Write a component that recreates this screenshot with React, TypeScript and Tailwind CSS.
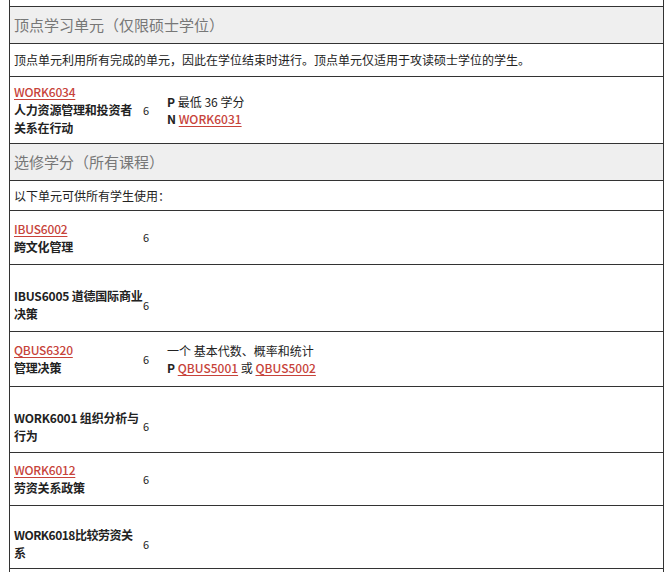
import React from "react";

const L = ({ c }: { c: string }) => (
  <a className="text-[#c7433a] underline decoration-[#c7433a] underline-offset-2 font-medium">{c}</a>
);

const Row = ({ h, a, b, c, pt = "" }: { h: string; a: React.ReactNode; b?: string; c?: React.ReactNode; pt?: string }) => (
  <div className={`flex items-center border-b border-[#333] ${h} ${pt}`}>
    <div className="w-[133px] pl-[4px] leading-[18px] tracking-[-0.2px]">{a}</div>
    <div className="w-[24px] text-[11px]">{b}</div>
    <div className="flex-1 leading-[17px]">{c}</div>
  </div>
);

export default function App() {
  return (
    <div className="w-[670px] h-[572px] overflow-hidden bg-white text-[12px] text-[#222]" style={{ fontFamily: '"Noto Sans CJK SC", "Noto Sans", sans-serif' }}>
      <div className="ml-[9px] w-[655px] border-x border-[#333]">
        <div className="h-[7px] border-b border-[#333]" />
        <div className="h-[37px] bg-[#efefef] border-b border-[#333] flex items-center pl-[4px] text-[15px] text-[#777]">顶点学习单元（仅限硕士学位）</div>
        <div className="h-[33px] border-b border-[#333] flex items-center pl-[4px]">顶点单元利用所有完成的单元，因此在学位结束时进行。顶点单元仅适用于攻读硕士学位的学生。</div>
        <Row h="h-[67px]" a={<><L c="WORK6034" /><div className="font-bold">人力资源管理和投资者关系在行动</div></>} b="6" c={<><div><b>P</b> 最低 36 学分</div><div><b>N</b> <L c="WORK6031" /></div></>} />
        <div className="h-[37px] bg-[#efefef] border-b border-[#333] flex items-center pl-[4px] text-[15px] text-[#777]">选修学分（所有课程）</div>
        <div className="h-[30px] border-b border-[#333] flex items-center pl-[4px]">以下单元可供所有学生使用：</div>
        <Row h="h-[54px]" a={<><L c="IBUS6002" /><div className="font-bold">跨文化管理</div></>} b="6" />
        <Row h="h-[67px]" pt="pt-[14px]" a={<div className="font-bold">IBUS6005 道德国际商业决策</div>} b="6" />
        <Row h="h-[55px]" a={<><L c="QBUS6320" /><div className="font-bold">管理决策</div></>} b="6" c={<><div>一个 基本代数、概率和统计</div><div><b>P</b> <L c="QBUS5001" /> 或 <L c="QBUS5002" /></div></>} />
        <Row h="h-[66px]" pt="pt-[14px]" a={<div className="font-bold">WORK6001 组织分析与行为</div>} b="6" />
        <Row h="h-[53px]" a={<><L c="WORK6012" /><div className="font-bold">劳资关系政策</div></>} b="6" />
        <Row h="h-[63px]" pt="pt-[14px]" a={<div className="font-bold tracking-[-0.5px]">WORK6018比较劳资关系</div>} b="6" />
        <div className="h-[20px]" />
      </div>
    </div>
  );
}
